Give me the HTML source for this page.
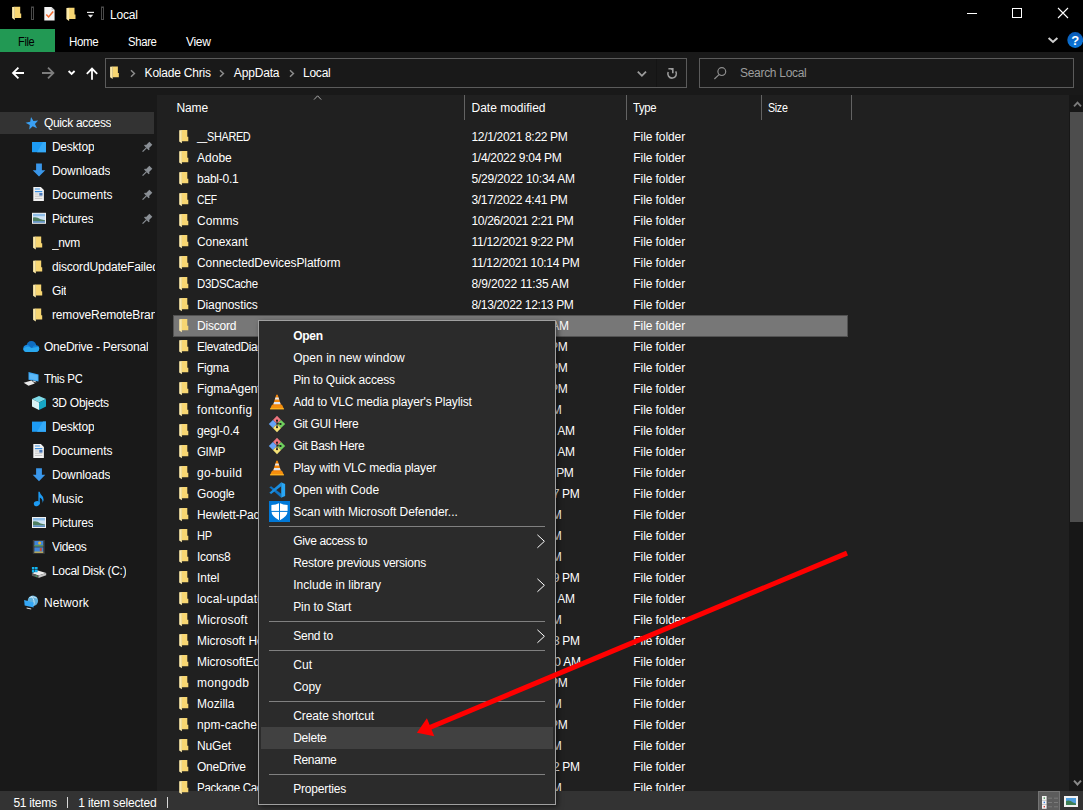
<!DOCTYPE html>
<html><head><meta charset="utf-8"><title>Local</title>
<style>
*{box-sizing:border-box;margin:0;padding:0}
html,body{width:1083px;height:810px;overflow:hidden;background:#191919}
body{position:relative;font-family:"Liberation Sans",sans-serif;font-size:12px;color:#fff}
.abs{position:absolute}
.t{position:absolute;white-space:nowrap;line-height:16px;height:16px}
#title{left:0;top:0;width:1083px;height:52px;background:#000}
#filetab{left:0;top:29px;width:55px;height:23px;background:#229954}
#nav{left:0;top:95px;width:157px;height:696px;background:#191919;overflow:hidden}
#list{left:157px;top:95px;width:912px;height:696px;background:#202020;overflow:hidden}
#status{left:0;top:791px;width:1083px;height:19px;background:#333}
.row{position:absolute;left:16px;width:674.5px;height:21px}
.row span{position:absolute;top:3px;line-height:16px;white-space:nowrap}
.row .n{left:24px}
.row .d{left:298.5px}
.row .ty{left:460.3px;letter-spacing:-0.08px}
.row.sel{background:#777;height:21.5px;height:22px;box-shadow:inset 0 0 0 1px #525252}
.ni{position:absolute;white-space:nowrap;line-height:16px;height:16px}
#navsel{left:0;top:17px;width:154px;height:22px;background:#333}
#menu{left:258px;top:320px;width:298px;height:485px;background:#2b2b2b;border:1px solid #a0a0a0;box-shadow:2px 2px 5px rgba(0,0,0,.5)}
.mi{position:absolute;left:34.2px;line-height:16px;white-space:nowrap}
.sep{position:absolute;left:10px;width:276px;height:1px;background:#808080}
#hl{left:2px;top:406px;width:292px;height:22px;background:#414141}
svg.ov{position:absolute;left:0;top:0}
</style></head><body>

<div class="abs" id="title"></div>
<div class="abs" id="filetab"></div>
<div class="t" style="left:18.2px;top:34px;letter-spacing:-0.35px;display:inline-block;transform-origin:0 0;transform:scaleX(0.914);color:#000;">File</div>
<div class="t" style="left:69.2px;top:34px;letter-spacing:-0.35px;display:inline-block;transform-origin:0 0;transform:scaleX(0.960);">Home</div>
<div class="t" style="left:128.4px;top:34px;letter-spacing:-0.35px;display:inline-block;transform-origin:0 0;transform:scaleX(0.944);">Share</div>
<div class="t" style="left:186px;top:34px;letter-spacing:-0.30px;">View</div>
<div class="t" style="left:110px;top:7px;letter-spacing:-0.22px;">Local</div>
<div class="abs" style="left:105px;top:58px;width:582px;height:30px;border:1px solid #5b5b5b;background:#191919"></div>
<div class="t" style="left:144.6px;top:65px;letter-spacing:-0.21px;">Kolade Chris</div>
<div class="t" style="left:233.8px;top:65px;letter-spacing:-0.16px;">AppData</div>
<div class="t" style="left:303px;top:65px;letter-spacing:-0.24px;">Local</div>
<div class="abs" style="left:699px;top:58px;width:375px;height:30px;border:1px solid #5b5b5b;background:#191919"></div>
<div class="t" style="left:740px;top:65px;letter-spacing:-0.30px;color:#9d9d9d;">Search Local</div>
<div class="abs" id="nav"><div class="abs" id="navsel"></div>
<div class="ni" style="left:43.9px;top:20px;max-width:111.29999999999998px;overflow:hidden;letter-spacing:-0.33px">Quick access</div>
<div class="ni" style="left:51.9px;top:44px;max-width:103.29999999999998px;overflow:hidden;letter-spacing:-0.22px">Desktop</div>
<div class="ni" style="left:51.9px;top:68px;max-width:103.29999999999998px;overflow:hidden;letter-spacing:-0.09px">Downloads</div>
<div class="ni" style="left:51.9px;top:92px;max-width:103.29999999999998px;overflow:hidden;letter-spacing:-0.01px">Documents</div>
<div class="ni" style="left:51.9px;top:116px;max-width:103.29999999999998px;overflow:hidden;letter-spacing:-0.22px">Pictures</div>
<div class="ni" style="left:51.9px;top:140px;max-width:103.29999999999998px;overflow:hidden;letter-spacing:-0.35px">_nvm</div>
<div class="ni" style="left:51.9px;top:164px;max-width:103.29999999999998px;overflow:hidden;letter-spacing:-0.17px">discordUpdateFailed</div>
<div class="ni" style="left:51.9px;top:188px;max-width:103.29999999999998px;overflow:hidden;letter-spacing:-0.31px">Git</div>
<div class="ni" style="left:51.9px;top:212px;max-width:103.29999999999998px;overflow:hidden;letter-spacing:-0.13px">removeRemoteBranch</div>
<div class="ni" style="left:43.9px;top:244px;max-width:111.29999999999998px;overflow:hidden;letter-spacing:-0.22px">OneDrive - Personal</div>
<div class="ni" style="left:43.9px;top:276px;max-width:111.29999999999998px;overflow:hidden;letter-spacing:-0.35px;display:inline-block;transform-origin:0 0;transform:scaleX(0.962)">This PC</div>
<div class="ni" style="left:51.9px;top:300px;max-width:103.29999999999998px;overflow:hidden;letter-spacing:-0.25px">3D Objects</div>
<div class="ni" style="left:51.9px;top:324px;max-width:103.29999999999998px;overflow:hidden;letter-spacing:-0.22px">Desktop</div>
<div class="ni" style="left:51.9px;top:348px;max-width:103.29999999999998px;overflow:hidden;letter-spacing:-0.01px">Documents</div>
<div class="ni" style="left:51.9px;top:372px;max-width:103.29999999999998px;overflow:hidden;letter-spacing:-0.09px">Downloads</div>
<div class="ni" style="left:51.9px;top:396px;max-width:103.29999999999998px;overflow:hidden;letter-spacing:0.03px">Music</div>
<div class="ni" style="left:51.9px;top:420px;max-width:103.29999999999998px;overflow:hidden;letter-spacing:-0.22px">Pictures</div>
<div class="ni" style="left:51.9px;top:444px;max-width:103.29999999999998px;overflow:hidden;letter-spacing:-0.30px">Videos</div>
<div class="ni" style="left:51.9px;top:468px;max-width:103.29999999999998px;overflow:hidden;letter-spacing:-0.28px">Local Disk (C:)</div>
<div class="ni" style="left:43.9px;top:500px;max-width:111.29999999999998px;overflow:hidden;letter-spacing:0.15px">Network</div>
</div>
<div class="abs" id="list">
<div class="t" style="left:19.4px;top:5px;letter-spacing:-0.10px">Name</div>
<div class="t" style="left:314.5px;top:5px;letter-spacing:-0.00px">Date modified</div>
<div class="t" style="left:476.2px;top:5px;letter-spacing:-0.35px;display:inline-block;transform-origin:0 0;transform:scaleX(0.942)">Type</div>
<div class="t" style="left:611.2px;top:5px;letter-spacing:-0.35px;display:inline-block;transform-origin:0 0;transform:scaleX(0.889)">Size</div>
<div class="row" style="top:31px"><span class="n" style="top:2px;letter-spacing:-0.35px;display:inline-block;transform-origin:0 0;transform:scaleX(0.782)">__</span><span class="n" style="left:33.9px;letter-spacing:-0.35px;display:inline-block;transform-origin:0 0;transform:scaleX(0.906)">SHARED</span><span class="d" style="letter-spacing:-0.32px">12/1/2021 8:22 PM</span><span class="ty">File folder</span></div>
<div class="row" style="top:52px"><span class="n" style="letter-spacing:0.02px">Adobe</span><span class="d" style="letter-spacing:-0.30px">1/4/2022 9:04 PM</span><span class="ty">File folder</span></div>
<div class="row" style="top:73px"><span class="n" style="letter-spacing:-0.23px">babl-0.1</span><span class="d" style="letter-spacing:-0.23px">5/29/2022 10:34 AM</span><span class="ty">File folder</span></div>
<div class="row" style="top:94px"><span class="n" style="letter-spacing:-0.35px;display:inline-block;transform-origin:0 0;transform:scaleX(0.858)">CEF</span><span class="d" style="letter-spacing:-0.32px">3/17/2022 4:41 PM</span><span class="ty">File folder</span></div>
<div class="row" style="top:115px"><span class="n" style="letter-spacing:0.03px">Comms</span><span class="d" style="letter-spacing:-0.34px">10/26/2021 2:21 PM</span><span class="ty">File folder</span></div>
<div class="row" style="top:136px"><span class="n" style="letter-spacing:-0.08px">Conexant</span><span class="d" style="letter-spacing:-0.29px">11/12/2021 9:22 PM</span><span class="ty">File folder</span></div>
<div class="row" style="top:157px"><span class="n" style="letter-spacing:-0.08px">ConnectedDevicesPlatform</span><span class="d" style="letter-spacing:-0.31px">11/12/2021 10:14 PM</span><span class="ty">File folder</span></div>
<div class="row" style="top:178px"><span class="n" style="letter-spacing:-0.35px;display:inline-block;transform-origin:0 0;transform:scaleX(0.955)">D3DSCache</span><span class="d" style="letter-spacing:-0.15px">8/9/2022 11:35 AM</span><span class="ty">File folder</span></div>
<div class="row" style="top:199px"><span class="n" style="letter-spacing:-0.12px">Diagnostics</span><span class="d" style="letter-spacing:-0.34px">8/13/2022 12:13 PM</span><span class="ty">File folder</span></div>
<div class="row sel" style="top:220px"><span class="n" style="letter-spacing:-0.20px">Discord</span><span class="d" style="letter-spacing:-0.20px">8/13/2022 9:41 AM</span><span class="ty">File folder</span></div>
<div class="row" style="top:241px"><span class="n" style="letter-spacing:-0.35px;display:inline-block;transform-origin:0 0;transform:scaleX(0.989)">ElevatedDiagnostics</span><span class="d" style="letter-spacing:-0.32px">12/1/2021 8:30 PM</span><span class="ty">File folder</span></div>
<div class="row" style="top:262px"><span class="n" style="letter-spacing:-0.27px">Figma</span><span class="d" style="letter-spacing:-0.32px">5/14/2022 7:52 PM</span><span class="ty">File folder</span></div>
<div class="row" style="top:283px"><span class="n" style="letter-spacing:-0.12px">FigmaAgent</span><span class="d" style="letter-spacing:-0.32px">5/14/2022 7:52 PM</span><span class="ty">File folder</span></div>
<div class="row" style="top:304px"><span class="n" style="letter-spacing:0.34px">fontconfig</span><span class="d" style="letter-spacing:-0.24px">3/5/2022 2:11 PM</span><span class="ty">File folder</span></div>
<div class="row" style="top:325px"><span class="n" style="letter-spacing:-0.12px">gegl-0.4</span><span class="d" style="letter-spacing:-0.23px">5/29/2022 10:34 AM</span><span class="ty">File folder</span></div>
<div class="row" style="top:346px"><span class="n" style="letter-spacing:-0.35px;display:inline-block;transform-origin:0 0;transform:scaleX(0.960)">GIMP</span><span class="d" style="letter-spacing:-0.23px">5/29/2022 10:34 AM</span><span class="ty">File folder</span></div>
<div class="row" style="top:367px"><span class="n" style="letter-spacing:0.32px">go-build</span><span class="d" style="letter-spacing:-0.34px">3/14/2022 12:40 PM</span><span class="ty">File folder</span></div>
<div class="row" style="top:388px"><span class="n" style="letter-spacing:-0.18px">Google</span><span class="d" style="letter-spacing:-0.31px">11/12/2021 10:17 PM</span><span class="ty">File folder</span></div>
<div class="row" style="top:409px"><span class="n" style="letter-spacing:-0.21px">Hewlett-Packard</span><span class="d" style="letter-spacing:-0.30px">1/4/2022 8:25 PM</span><span class="ty">File folder</span></div>
<div class="row" style="top:430px"><span class="n" style="letter-spacing:-0.35px;display:inline-block;transform-origin:0 0;transform:scaleX(0.927)">HP</span><span class="d" style="letter-spacing:-0.30px">1/4/2022 8:25 PM</span><span class="ty">File folder</span></div>
<div class="row" style="top:451px"><span class="n" style="letter-spacing:-0.35px">Icons8</span><span class="d" style="letter-spacing:-0.30px">4/2/2022 1:15 PM</span><span class="ty">File folder</span></div>
<div class="row" style="top:472px"><span class="n" style="letter-spacing:-0.06px">Intel</span><span class="d" style="letter-spacing:-0.31px">11/12/2021 10:19 PM</span><span class="ty">File folder</span></div>
<div class="row" style="top:493px"><span class="n" style="letter-spacing:0.13px">local-updater</span><span class="d" style="letter-spacing:-0.23px">7/21/2022 10:41 AM</span><span class="ty">File folder</span></div>
<div class="row" style="top:514px"><span class="n" style="letter-spacing:0.23px">Microsoft</span><span class="d" style="letter-spacing:-0.30px">8/2/2022 1:05 PM</span><span class="ty">File folder</span></div>
<div class="row" style="top:535px"><span class="n" style="letter-spacing:-0.06px">Microsoft Help</span><span class="d" style="letter-spacing:-0.35px">10/26/2021 12:13 PM</span><span class="ty">File folder</span></div>
<div class="row" style="top:556px"><span class="n" style="letter-spacing:-0.03px">MicrosoftEdge</span><span class="d" style="letter-spacing:-0.21px">10/26/2021 11:40 AM</span><span class="ty">File folder</span></div>
<div class="row" style="top:577px"><span class="n" style="letter-spacing:0.31px">mongodb</span><span class="d" style="letter-spacing:-0.32px">1/20/2022 3:45 PM</span><span class="ty">File folder</span></div>
<div class="row" style="top:598px"><span class="n" style="letter-spacing:0.01px">Mozilla</span><span class="d" style="letter-spacing:-0.30px">3/2/2022 1:21 PM</span><span class="ty">File folder</span></div>
<div class="row" style="top:619px"><span class="n" style="letter-spacing:0.08px">npm-cache</span><span class="d" style="letter-spacing:-0.32px">1/14/2022 4:18 PM</span><span class="ty">File folder</span></div>
<div class="row" style="top:640px"><span class="n" style="letter-spacing:-0.18px">NuGet</span><span class="d" style="letter-spacing:-0.30px">2/9/2022 2:07 PM</span><span class="ty">File folder</span></div>
<div class="row" style="top:661px"><span class="n" style="letter-spacing:-0.24px">OneDrive</span><span class="d" style="letter-spacing:-0.35px">10/26/2021 12:02 PM</span><span class="ty">File folder</span></div>
<div class="row" style="top:682px"><span class="n" style="letter-spacing:-0.35px;display:inline-block;transform-origin:0 0;transform:scaleX(0.966)">Package Cache</span><span class="d" style="letter-spacing:-0.30px">1/4/2022 3:50 PM</span><span class="ty">File folder</span></div>
</div>
<div class="abs" id="status"></div>
<div class="t" style="left:13.4px;top:795px;letter-spacing:-0.26px;">51 items</div>
<div class="abs" style="left:67px;top:797px;width:1px;height:11px;background:#d8d8d8"></div>
<div class="t" style="left:78.2px;top:795px;letter-spacing:-0.16px;">1 item selected</div>
<div class="abs" style="left:167px;top:797px;width:1px;height:11px;background:#d8d8d8"></div>
<svg class="ov" width="1083" height="810" viewBox="0 0 1083 810"><g transform="translate(12 6.3) scale(1.0)"><path d="M2.6 0.4 H8.2 V7.2 H9.2 V11.6 H2.6 Z" fill="#f7d672"/><path d="M0.1 0.7 L2.8 0.4 V13.6 L0.1 11.8 Z" fill="#fdeaa8"/></g>
<rect x="31.5" y="7" width="2" height="12.5" fill="none" stroke="#4a4a4a" stroke-width="1"/>
<path d="M44.3 7 H51.5 L54.6 10 V20.4 H44.3 Z" fill="#f4f4f4"/><path d="M51.5 7 L54.6 10 H51.5 Z" fill="#c9c9c9"/><path d="M46.3 14.6 L48.6 17 L53.2 11.6" fill="none" stroke="#f26a2e" stroke-width="1.5"/>
<g transform="translate(66.3 7.3) scale(1.0)"><path d="M2.6 0.4 H8.2 V7.2 H9.2 V11.6 H2.6 Z" fill="#f7d672"/><path d="M0.1 0.7 L2.8 0.4 V13.6 L0.1 11.8 Z" fill="#fdeaa8"/></g>
<path d="M87 12.4 H94" stroke="#e8e8e8" stroke-width="1.2"/><path d="M87.8 14.8 H93.2 L90.5 17.8 Z" fill="#e8e8e8"/>
<rect x="101.5" y="7" width="2" height="12.5" fill="none" stroke="#4a4a4a" stroke-width="1"/>
<path d="M967 13.5 H977" stroke="#fff" stroke-width="1"/>
<rect x="1012.5" y="8.5" width="9" height="9" fill="none" stroke="#fff" stroke-width="1"/>
<path d="M1058 8 L1068 18 M1068 8 L1058 18" stroke="#fff" stroke-width="1.1"/>
<path d="M1048.6 38 L1053 42 L1057.4 38" fill="none" stroke="#cfcfcf" stroke-width="2"/>
<linearGradient id="hg" x1="0" y1="0" x2="0" y2="1"><stop offset="0" stop-color="#0a5ab6"/><stop offset="1" stop-color="#0b78da"/></linearGradient><circle cx="1075.2" cy="40" r="7.9" fill="url(#hg)"/>
<path d="M24 73 H13 M18.4 67.6 L13 73 L18.4 78.4" fill="none" stroke="#fff" stroke-width="1.8"/>
<path d="M42 73 H53.3 M48 67.6 L53.4 73 L48 78.4" fill="none" stroke="#7d7d7d" stroke-width="1.8"/>
<path d="M68.6 71 L71.6 74 L74.6 71" fill="none" stroke="#fff" stroke-width="1.8"/>
<path d="M92 79.8 V69 M86.8 73.8 L92 68.6 L97.2 73.8" fill="none" stroke="#fff" stroke-width="1.8"/>
<g transform="translate(110 66) scale(0.96)"><path d="M2.6 0.4 H8.2 V7.2 H9.2 V11.6 H2.6 Z" fill="#f7d672"/><path d="M0.1 0.7 L2.8 0.4 V13.6 L0.1 11.8 Z" fill="#fdeaa8"/></g>
<path d="M131 70.3 L134.4 73.5 L131 76.7" fill="none" stroke="#8c8c8c" stroke-width="1.5"/>
<path d="M220 70.3 L223.4 73.5 L220 76.7" fill="none" stroke="#8c8c8c" stroke-width="1.5"/>
<path d="M290 70.3 L293.4 73.5 L290 76.7" fill="none" stroke="#8c8c8c" stroke-width="1.5"/>
<path d="M637.8 71.6 L641.9 75.8 L646 71.6" fill="none" stroke="#9c9c9c" stroke-width="1.8"/>
<path d="M656.5 59 V87" stroke="#141414" stroke-width="1"/>
<path d="M675.7 71.4 A4.3 4.3 0 1 1 668.2 72" fill="none" stroke="#9c9c9c" stroke-width="1.6"/><path d="M668.4 68.7 H672.8 V73.2" fill="none" stroke="#9c9c9c" stroke-width="1.6"/><path d="M670.6 69 H672.6 V71 Z" fill="#9c9c9c"/>
<circle cx="721.8" cy="71.6" r="3.9" fill="none" stroke="#8e8e8e" stroke-width="1.2"/><path d="M719 74.6 L714.4 79" stroke="#8e8e8e" stroke-width="1.2"/>
<path d="M314 99.6 L317.6 95.8 L321.2 99.6" fill="none" stroke="#a9a9a9" stroke-width="1"/>
<path d="M464.5 95 V120" stroke="#636363" stroke-width="1"/>
<path d="M626.5 95 V120" stroke="#636363" stroke-width="1"/>
<path d="M761.5 95 V120" stroke="#636363" stroke-width="1"/>
<path d="M851.5 95 V120" stroke="#636363" stroke-width="1"/>
<rect x="1069" y="95" width="14" height="696" fill="#171717"/>
<rect x="1070" y="112" width="13" height="410" fill="#4d4d4d"/>
<path d="M1074 106.4 L1077.5 102.6 L1081 106.4" fill="none" stroke="#7c7c7c" stroke-width="1.8"/>
<path d="M1074 780.6 L1077.5 784.4 L1081 780.6" fill="none" stroke="#8a8a8a" stroke-width="2"/>
<g transform="rotate(-10 32.2 123.6)"><polygon points="32.20,116.90 33.85,121.33 38.57,121.53 34.86,124.47 36.14,129.02 32.20,126.40 28.26,129.02 29.54,124.47 25.83,121.53 30.55,121.33" fill="#3aa0f3"/></g>
<rect x="32" y="142" width="14" height="10.2" fill="#1d9bf3"/><path d="M37 152.2 L43 142 H46 V152.2 Z" fill="#35a9f7"/>
<path d="M36.1 163.6 H41.9 V170.2 H45.3 L39.0 176.6 L32.7 170.2 H36.1 Z" fill="#3a97ea"/>
<path d="M33.3 187 H40.9 L43.9 190 V201 H33.3 Z" fill="#f2f2f2"/><path d="M34.9 189 H39.9 M34.9 191.6 H42.3" stroke="#3b8fe0" stroke-width="1.1"/><path d="M34.9 194 H38.699999999999996 M34.9 196.2 H42.3 M34.9 198.4 H42.3" stroke="#c2c2c2" stroke-width="1"/><rect x="39.3" y="193" width="3.2" height="2.6" fill="#4a78b8"/>
<rect x="32" y="212.8" width="14" height="11" fill="#f1f1f1"/><rect x="33" y="213.8" width="12" height="9" fill="#cfe3f4"/><rect x="33" y="213.8" width="12" height="2.4" fill="#8fbfea"/><path d="M33 217.4 Q36.6 216.4 40.6 219.20000000000002 L45 220.20000000000002 V221.4 H33 Z" fill="#4f7f62"/><path d="M33 221.20000000000002 H45 V222.8 H33 Z" fill="#5f8fc4"/>
<g transform="translate(146.6 147.6) rotate(45)" fill="#8b9096"><rect x="-2.1" y="-6" width="4.2" height="5.2"/><rect x="-3.3" y="-1.2" width="6.6" height="1.5"/><rect x="-0.6" y="0.3" width="1.2" height="5.4"/></g>
<g transform="translate(146.6 171.6) rotate(45)" fill="#8b9096"><rect x="-2.1" y="-6" width="4.2" height="5.2"/><rect x="-3.3" y="-1.2" width="6.6" height="1.5"/><rect x="-0.6" y="0.3" width="1.2" height="5.4"/></g>
<g transform="translate(146.6 195.6) rotate(45)" fill="#8b9096"><rect x="-2.1" y="-6" width="4.2" height="5.2"/><rect x="-3.3" y="-1.2" width="6.6" height="1.5"/><rect x="-0.6" y="0.3" width="1.2" height="5.4"/></g>
<g transform="translate(146.6 219.6) rotate(45)" fill="#8b9096"><rect x="-2.1" y="-6" width="4.2" height="5.2"/><rect x="-3.3" y="-1.2" width="6.6" height="1.5"/><rect x="-0.6" y="0.3" width="1.2" height="5.4"/></g>
<g transform="translate(33 236.0) scale(1.0)"><path d="M2.6 0.4 H8.2 V7.2 H9.2 V11.6 H2.6 Z" fill="#f7d672"/><path d="M0.1 0.7 L2.8 0.4 V13.6 L0.1 11.8 Z" fill="#fdeaa8"/></g>
<g transform="translate(33 260.0) scale(1.0)"><path d="M2.6 0.4 H8.2 V7.2 H9.2 V11.6 H2.6 Z" fill="#f7d672"/><path d="M0.1 0.7 L2.8 0.4 V13.6 L0.1 11.8 Z" fill="#fdeaa8"/></g>
<g transform="translate(33 284.0) scale(1.0)"><path d="M2.6 0.4 H8.2 V7.2 H9.2 V11.6 H2.6 Z" fill="#f7d672"/><path d="M0.1 0.7 L2.8 0.4 V13.6 L0.1 11.8 Z" fill="#fdeaa8"/></g>
<g transform="translate(33 308.0) scale(1.0)"><path d="M2.6 0.4 H8.2 V7.2 H9.2 V11.6 H2.6 Z" fill="#f7d672"/><path d="M0.1 0.7 L2.8 0.4 V13.6 L0.1 11.8 Z" fill="#fdeaa8"/></g>
<circle cx="31.4" cy="346" r="4.9" fill="#0f6dc0"/><circle cx="35.8" cy="348.6" r="3.4" fill="#1483d8"/><circle cx="26.8" cy="348.5" r="3.5" fill="#1b8de4"/><path d="M23.3 348.8 Q27 345.4 31.6 348 L38.6 346.8 A3.3 3.3 0 0 1 36 352 H26.6 A3.5 3.5 0 0 1 23.3 348.8 Z" fill="#2aa8ee"/>
<path d="M28.5 372.1 L38.5 374.5 V381.6 L28.5 379.7 Z" fill="#3aa6f3"/><path d="M29.5 373.4 L37.6 375.3 V380.4 L29.5 378.8 Z" fill="#5cb8f7"/><path d="M33 380.4 L35.4 380.9 L36.6 382.6 L33.4 382 Z" fill="#c8c8c8"/><path d="M23.7 382.7 L31.5 380.4 L34.8 383.4 L28.5 385.8 Z" fill="#e9e9e9"/>
<path d="M39 396 L46 399 L39 402.4 L32 399 Z" fill="#7fdbe8"/><path d="M32 399 L39 402.4 V410 L32 406.6 Z" fill="#d8f3f6"/><path d="M46 399 L39 402.4 V410 L46 406.6 Z" fill="#17a6c4"/>
<rect x="32" y="421.6" width="14" height="10.2" fill="#1d9bf3"/><path d="M37 431.8 L43 421.6 H46 V431.8 Z" fill="#35a9f7"/>
<path d="M33.3 444 H40.9 L43.9 447 V458 H33.3 Z" fill="#f2f2f2"/><path d="M34.9 446 H39.9 M34.9 448.6 H42.3" stroke="#3b8fe0" stroke-width="1.1"/><path d="M34.9 451 H38.699999999999996 M34.9 453.2 H42.3 M34.9 455.4 H42.3" stroke="#c2c2c2" stroke-width="1"/><rect x="39.3" y="450" width="3.2" height="2.6" fill="#4a78b8"/>
<path d="M36.1 468.2 H41.9 V474.8 H45.3 L39.0 481.2 L32.7 474.8 H36.1 Z" fill="#3a97ea"/>
<ellipse cx="36.8" cy="503.6" rx="3" ry="2.5" transform="rotate(-20 36.8 503.6)" fill="#1d9bf3"/><path d="M38.4 504 V491.8 H39.6 Q40.2 494.6 43 497 Q44.4 499.6 42.6 503 Q43 499.4 39.8 497.6 V504 Z" fill="#1d9bf3"/>
<rect x="32" y="517" width="14" height="11" fill="#f1f1f1"/><rect x="33" y="518" width="12" height="9" fill="#cfe3f4"/><rect x="33" y="518" width="12" height="2.4" fill="#8fbfea"/><path d="M33 521.6 Q36.6 520.6 40.6 523.4 L45 524.4 V525.6 H33 Z" fill="#4f7f62"/><path d="M33 525.4 H45 V527 H33 Z" fill="#5f8fc4"/>
<rect x="32.8" y="540" width="12" height="13.8" fill="#3c3c3c"/><rect x="34.4" y="541" width="8.8" height="5.4" fill="#3f86d8"/><rect x="34.4" y="547.4" width="8.8" height="5.4" fill="#3f86d8"/><circle cx="39.6" cy="543" r="1.5" fill="#e3b33a"/><path d="M34.4 545.2 H43.2 V546.4 H34.4 Z" fill="#5a9a4a"/><path d="M34.4 551.6 H43.2 V552.8 H34.4 Z" fill="#d0b040"/><rect x="39.8" y="548" width="2" height="3.2" fill="#c0503a"/>
<path d="M31.9 573.2 L37.8 570.6 L46.2 572.9 L38.5 575.6 Z" fill="#ececec"/><path d="M31.9 573.2 L38.5 575.6 V578 L31.9 575.7 Z" fill="#5a5a5a"/><path d="M38.5 575.6 L46.2 572.9 V575.2 L38.5 578 Z" fill="#c4c4c4"/><rect x="35.6" y="575.6" width="1.6" height="0.9" fill="#35c45a" transform="rotate(19 36 576)"/><path d="M31.9 566.9 H34.5 V569.5 H31.9 Z M35 566.9 H37.6 V569.5 H35 Z M31.9 570 H34.5 V572.6 H31.9 Z M35 570 H37.6 V572.2 H35 Z" fill="#12b3f0"/>
<circle cx="32.9" cy="600.8" r="5.2" fill="#5fb0dc"/><path d="M29.4 597.6 Q33 595.6 36.8 598.2 M31.2 596 Q35.6 600.6 33.4 605.8" fill="none" stroke="#c9e6f6" stroke-width="1"/><path d="M24.1 600.1 L33.6 602.5 V607.6 L24.7 605.6 Z" fill="#35a7f5"/><path d="M26.6 607.6 L31.2 608.6 V609.6 L26.6 608.6 Z" fill="#e4e4e4"/>
<g transform="translate(179.1 129.6) scale(1.0)"><path d="M2.6 0.4 H8.2 V7.2 H9.2 V11.6 H2.6 Z" fill="#f7d672"/><path d="M0.1 0.7 L2.8 0.4 V13.6 L0.1 11.8 Z" fill="#fdeaa8"/></g>
<g transform="translate(179.1 150.6) scale(1.0)"><path d="M2.6 0.4 H8.2 V7.2 H9.2 V11.6 H2.6 Z" fill="#f7d672"/><path d="M0.1 0.7 L2.8 0.4 V13.6 L0.1 11.8 Z" fill="#fdeaa8"/></g>
<g transform="translate(179.1 171.6) scale(1.0)"><path d="M2.6 0.4 H8.2 V7.2 H9.2 V11.6 H2.6 Z" fill="#f7d672"/><path d="M0.1 0.7 L2.8 0.4 V13.6 L0.1 11.8 Z" fill="#fdeaa8"/></g>
<g transform="translate(179.1 192.6) scale(1.0)"><path d="M2.6 0.4 H8.2 V7.2 H9.2 V11.6 H2.6 Z" fill="#f7d672"/><path d="M0.1 0.7 L2.8 0.4 V13.6 L0.1 11.8 Z" fill="#fdeaa8"/></g>
<g transform="translate(179.1 213.6) scale(1.0)"><path d="M2.6 0.4 H8.2 V7.2 H9.2 V11.6 H2.6 Z" fill="#f7d672"/><path d="M0.1 0.7 L2.8 0.4 V13.6 L0.1 11.8 Z" fill="#fdeaa8"/></g>
<g transform="translate(179.1 234.6) scale(1.0)"><path d="M2.6 0.4 H8.2 V7.2 H9.2 V11.6 H2.6 Z" fill="#f7d672"/><path d="M0.1 0.7 L2.8 0.4 V13.6 L0.1 11.8 Z" fill="#fdeaa8"/></g>
<g transform="translate(179.1 255.6) scale(1.0)"><path d="M2.6 0.4 H8.2 V7.2 H9.2 V11.6 H2.6 Z" fill="#f7d672"/><path d="M0.1 0.7 L2.8 0.4 V13.6 L0.1 11.8 Z" fill="#fdeaa8"/></g>
<g transform="translate(179.1 276.6) scale(1.0)"><path d="M2.6 0.4 H8.2 V7.2 H9.2 V11.6 H2.6 Z" fill="#f7d672"/><path d="M0.1 0.7 L2.8 0.4 V13.6 L0.1 11.8 Z" fill="#fdeaa8"/></g>
<g transform="translate(179.1 297.6) scale(1.0)"><path d="M2.6 0.4 H8.2 V7.2 H9.2 V11.6 H2.6 Z" fill="#f7d672"/><path d="M0.1 0.7 L2.8 0.4 V13.6 L0.1 11.8 Z" fill="#fdeaa8"/></g>
<g transform="translate(179.1 318.6) scale(1.0)"><path d="M2.6 0.4 H8.2 V7.2 H9.2 V11.6 H2.6 Z" fill="#f7d672"/><path d="M0.1 0.7 L2.8 0.4 V13.6 L0.1 11.8 Z" fill="#fdeaa8"/></g>
<g transform="translate(179.1 339.6) scale(1.0)"><path d="M2.6 0.4 H8.2 V7.2 H9.2 V11.6 H2.6 Z" fill="#f7d672"/><path d="M0.1 0.7 L2.8 0.4 V13.6 L0.1 11.8 Z" fill="#fdeaa8"/></g>
<g transform="translate(179.1 360.6) scale(1.0)"><path d="M2.6 0.4 H8.2 V7.2 H9.2 V11.6 H2.6 Z" fill="#f7d672"/><path d="M0.1 0.7 L2.8 0.4 V13.6 L0.1 11.8 Z" fill="#fdeaa8"/></g>
<g transform="translate(179.1 381.6) scale(1.0)"><path d="M2.6 0.4 H8.2 V7.2 H9.2 V11.6 H2.6 Z" fill="#f7d672"/><path d="M0.1 0.7 L2.8 0.4 V13.6 L0.1 11.8 Z" fill="#fdeaa8"/></g>
<g transform="translate(179.1 402.6) scale(1.0)"><path d="M2.6 0.4 H8.2 V7.2 H9.2 V11.6 H2.6 Z" fill="#f7d672"/><path d="M0.1 0.7 L2.8 0.4 V13.6 L0.1 11.8 Z" fill="#fdeaa8"/></g>
<g transform="translate(179.1 423.6) scale(1.0)"><path d="M2.6 0.4 H8.2 V7.2 H9.2 V11.6 H2.6 Z" fill="#f7d672"/><path d="M0.1 0.7 L2.8 0.4 V13.6 L0.1 11.8 Z" fill="#fdeaa8"/></g>
<g transform="translate(179.1 444.6) scale(1.0)"><path d="M2.6 0.4 H8.2 V7.2 H9.2 V11.6 H2.6 Z" fill="#f7d672"/><path d="M0.1 0.7 L2.8 0.4 V13.6 L0.1 11.8 Z" fill="#fdeaa8"/></g>
<g transform="translate(179.1 465.6) scale(1.0)"><path d="M2.6 0.4 H8.2 V7.2 H9.2 V11.6 H2.6 Z" fill="#f7d672"/><path d="M0.1 0.7 L2.8 0.4 V13.6 L0.1 11.8 Z" fill="#fdeaa8"/></g>
<g transform="translate(179.1 486.6) scale(1.0)"><path d="M2.6 0.4 H8.2 V7.2 H9.2 V11.6 H2.6 Z" fill="#f7d672"/><path d="M0.1 0.7 L2.8 0.4 V13.6 L0.1 11.8 Z" fill="#fdeaa8"/></g>
<g transform="translate(179.1 507.6) scale(1.0)"><path d="M2.6 0.4 H8.2 V7.2 H9.2 V11.6 H2.6 Z" fill="#f7d672"/><path d="M0.1 0.7 L2.8 0.4 V13.6 L0.1 11.8 Z" fill="#fdeaa8"/></g>
<g transform="translate(179.1 528.6) scale(1.0)"><path d="M2.6 0.4 H8.2 V7.2 H9.2 V11.6 H2.6 Z" fill="#f7d672"/><path d="M0.1 0.7 L2.8 0.4 V13.6 L0.1 11.8 Z" fill="#fdeaa8"/></g>
<g transform="translate(179.1 549.6) scale(1.0)"><path d="M2.6 0.4 H8.2 V7.2 H9.2 V11.6 H2.6 Z" fill="#f7d672"/><path d="M0.1 0.7 L2.8 0.4 V13.6 L0.1 11.8 Z" fill="#fdeaa8"/></g>
<g transform="translate(179.1 570.6) scale(1.0)"><path d="M2.6 0.4 H8.2 V7.2 H9.2 V11.6 H2.6 Z" fill="#f7d672"/><path d="M0.1 0.7 L2.8 0.4 V13.6 L0.1 11.8 Z" fill="#fdeaa8"/></g>
<g transform="translate(179.1 591.6) scale(1.0)"><path d="M2.6 0.4 H8.2 V7.2 H9.2 V11.6 H2.6 Z" fill="#f7d672"/><path d="M0.1 0.7 L2.8 0.4 V13.6 L0.1 11.8 Z" fill="#fdeaa8"/></g>
<g transform="translate(179.1 612.6) scale(1.0)"><path d="M2.6 0.4 H8.2 V7.2 H9.2 V11.6 H2.6 Z" fill="#f7d672"/><path d="M0.1 0.7 L2.8 0.4 V13.6 L0.1 11.8 Z" fill="#fdeaa8"/></g>
<g transform="translate(179.1 633.6) scale(1.0)"><path d="M2.6 0.4 H8.2 V7.2 H9.2 V11.6 H2.6 Z" fill="#f7d672"/><path d="M0.1 0.7 L2.8 0.4 V13.6 L0.1 11.8 Z" fill="#fdeaa8"/></g>
<g transform="translate(179.1 654.6) scale(1.0)"><path d="M2.6 0.4 H8.2 V7.2 H9.2 V11.6 H2.6 Z" fill="#f7d672"/><path d="M0.1 0.7 L2.8 0.4 V13.6 L0.1 11.8 Z" fill="#fdeaa8"/></g>
<g transform="translate(179.1 675.6) scale(1.0)"><path d="M2.6 0.4 H8.2 V7.2 H9.2 V11.6 H2.6 Z" fill="#f7d672"/><path d="M0.1 0.7 L2.8 0.4 V13.6 L0.1 11.8 Z" fill="#fdeaa8"/></g>
<g transform="translate(179.1 696.6) scale(1.0)"><path d="M2.6 0.4 H8.2 V7.2 H9.2 V11.6 H2.6 Z" fill="#f7d672"/><path d="M0.1 0.7 L2.8 0.4 V13.6 L0.1 11.8 Z" fill="#fdeaa8"/></g>
<g transform="translate(179.1 717.6) scale(1.0)"><path d="M2.6 0.4 H8.2 V7.2 H9.2 V11.6 H2.6 Z" fill="#f7d672"/><path d="M0.1 0.7 L2.8 0.4 V13.6 L0.1 11.8 Z" fill="#fdeaa8"/></g>
<g transform="translate(179.1 738.6) scale(1.0)"><path d="M2.6 0.4 H8.2 V7.2 H9.2 V11.6 H2.6 Z" fill="#f7d672"/><path d="M0.1 0.7 L2.8 0.4 V13.6 L0.1 11.8 Z" fill="#fdeaa8"/></g>
<g transform="translate(179.1 759.6) scale(1.0)"><path d="M2.6 0.4 H8.2 V7.2 H9.2 V11.6 H2.6 Z" fill="#f7d672"/><path d="M0.1 0.7 L2.8 0.4 V13.6 L0.1 11.8 Z" fill="#fdeaa8"/></g>
<g transform="translate(179.1 780.6) scale(1.0)"><path d="M2.6 0.4 H8.2 V7.2 H9.2 V11.6 H2.6 Z" fill="#f7d672"/><path d="M0.1 0.7 L2.8 0.4 V13.6 L0.1 11.8 Z" fill="#fdeaa8"/></g>
<rect x="1038.5" y="791.5" width="21" height="19" fill="#5c5c5c" stroke="#747474" stroke-width="1"/>
<rect x="1042" y="796.0" width="4.6" height="4.2" fill="#f2f2f2"/><rect x="1043.6" y="797.4" width="1.4" height="1.4" fill="#3a8a4a"/>
<path d="M1048 798.2 H1052 M1054 798.2 H1058" stroke="#7a7a7a" stroke-width="1"/>
<rect x="1042" y="800.3" width="4.6" height="4.2" fill="#f2f2f2"/><rect x="1043.6" y="801.6999999999999" width="1.4" height="1.4" fill="#3a7fe0"/>
<path d="M1048 802.5 H1052 M1054 802.5 H1058" stroke="#7a7a7a" stroke-width="1"/>
<rect x="1042" y="804.6" width="4.6" height="4.2" fill="#f2f2f2"/><rect x="1043.6" y="806.0" width="1.4" height="1.4" fill="#d83a3a"/>
<path d="M1048 806.8000000000001 H1052 M1054 806.8000000000001 H1058" stroke="#7a7a7a" stroke-width="1"/>
<rect x="1064" y="796" width="14" height="11" fill="#f2f2f2"/><rect x="1066" y="798" width="10" height="7" fill="#4f9fe0"/><path d="M1066 801 Q1070 799.6 1073 802.6 L1076 803.4 V805 H1066 Z" fill="#3f7f55"/></svg>
<div class="t" style="left:1071.3px;top:33px;font-weight:bold;font-size:13px">?</div>
<div class="abs" id="menu"><div class="abs" id="hl"></div>
<div class="mi" style="top:7px;letter-spacing:-0.27px;font-weight:bold;">Open</div>
<div class="mi" style="top:29px;letter-spacing:0.05px;">Open in new window</div>
<div class="mi" style="top:51px;letter-spacing:-0.20px;">Pin to Quick access</div>
<div class="mi" style="top:73px;letter-spacing:-0.13px;">Add to VLC media player's Playlist</div>
<div class="mi" style="top:95px;letter-spacing:-0.35px;">Git GUI Here</div>
<div class="mi" style="top:117px;letter-spacing:-0.33px;">Git Bash Here</div>
<div class="mi" style="top:139px;letter-spacing:-0.14px;">Play with VLC media player</div>
<div class="mi" style="top:161px;letter-spacing:-0.01px;">Open with Code</div>
<div class="mi" style="top:183px;letter-spacing:-0.05px;">Scan with Microsoft Defender...</div>
<div class="mi" style="top:212px;letter-spacing:-0.35px;">Give access to</div>
<div class="mi" style="top:234px;letter-spacing:-0.24px;">Restore previous versions</div>
<div class="mi" style="top:256px;letter-spacing:0.03px;">Include in library</div>
<div class="mi" style="top:278px;letter-spacing:-0.11px;">Pin to Start</div>
<div class="mi" style="top:307px;letter-spacing:-0.24px;">Send to</div>
<div class="mi" style="top:336px;letter-spacing:0.10px;">Cut</div>
<div class="mi" style="top:358px;letter-spacing:-0.03px;">Copy</div>
<div class="mi" style="top:387px;letter-spacing:-0.08px;">Create shortcut</div>
<div class="mi" style="top:409px;letter-spacing:-0.23px;">Delete</div>
<div class="mi" style="top:431px;letter-spacing:-0.35px;">Rename</div>
<div class="mi" style="top:460px;letter-spacing:-0.17px;">Properties</div>
<div class="sep" style="top:205px"></div>
<div class="sep" style="top:300px"></div>
<div class="sep" style="top:329px"></div>
<div class="sep" style="top:380px"></div>
<div class="sep" style="top:453px"></div>
</div>
<svg class="ov" width="1083" height="810" viewBox="0 0 1083 810"><path d="M276.2 395.0 Q277 394.20000000000005 277.8 395.0 L281.3 406.0 H272.7 Z" fill="#f4860b"/><path d="M275.5 397.40000000000003 H278.5 L279.2 399.6 H274.8 Z" fill="#dfe6f2"/><path d="M274.1 402.0 H279.9 L280.6 404.20000000000005 H273.4 Z" fill="#dfe6f2"/><path d="M272.2 404.20000000000005 L273.4 405.8 H280.6 L281.8 404.20000000000005 L284 409.20000000000005 H270 Z" fill="#f58f0e"/><path d="M270.4 408.20000000000005 H283.6 L284 409.20000000000005 H270 Z" fill="#ffbd24"/>
<path d="M277 415.79999999999995 L281.1 419.9 L277 424.0 L272.9 419.9 Z" fill="#f0767f"/><path d="M272.9 419.9 L277.0 424 L272.9 428.1 L268.79999999999995 424 Z" fill="#66a3f7"/><path d="M281.1 419.9 L285.20000000000005 424 L281.1 428.1 L277.0 424 Z" fill="#6fcf5d"/><path d="M277 424.0 L281.1 428.1 L277 432.20000000000005 L272.9 428.1 Z" fill="#f6e377"/><path d="M277 420.4 V427 M277 423.6 L280.4 424" stroke="#1c1c1c" stroke-width="0.9" fill="none"/><circle cx="277" cy="420.4" r="1" fill="#1c1c1c"/><circle cx="277" cy="427.2" r="1" fill="#1c1c1c"/><circle cx="280.6" cy="424" r="1" fill="#1c1c1c"/>
<path d="M277 437.79999999999995 L281.1 441.9 L277 446.0 L272.9 441.9 Z" fill="#f0767f"/><path d="M272.9 441.9 L277.0 446 L272.9 450.1 L268.79999999999995 446 Z" fill="#66a3f7"/><path d="M281.1 441.9 L285.20000000000005 446 L281.1 450.1 L277.0 446 Z" fill="#6fcf5d"/><path d="M277 446.0 L281.1 450.1 L277 454.20000000000005 L272.9 450.1 Z" fill="#f6e377"/><path d="M277 442.4 V449 M277 445.6 L280.4 446" stroke="#1c1c1c" stroke-width="0.9" fill="none"/><circle cx="277" cy="442.4" r="1" fill="#1c1c1c"/><circle cx="277" cy="449.2" r="1" fill="#1c1c1c"/><circle cx="280.6" cy="446" r="1" fill="#1c1c1c"/>
<path d="M276.2 461.0 Q277 460.20000000000005 277.8 461.0 L281.3 472.0 H272.7 Z" fill="#f4860b"/><path d="M275.5 463.40000000000003 H278.5 L279.2 465.6 H274.8 Z" fill="#dfe6f2"/><path d="M274.1 468.0 H279.9 L280.6 470.20000000000005 H273.4 Z" fill="#dfe6f2"/><path d="M272.2 470.20000000000005 L273.4 471.8 H280.6 L281.8 470.20000000000005 L284 475.20000000000005 H270 Z" fill="#f58f0e"/><path d="M270.4 474.20000000000005 H283.6 L284 475.20000000000005 H270 Z" fill="#ffbd24"/>
<g transform="translate(269 481.9) scale(0.163)"><path d="M75 98 L75 73 L13 26 L2 33 Z" fill="#0f74c4"/><path d="M75 2 L75 27 L13 74 L2 67 Z" fill="#1a8ee0"/><path d="M75 2 L99 13 V87 L75 98 Z" fill="#29a6f4"/></g>
<rect x="269" y="501" width="21" height="21" fill="#0078d7"/><path d="M279.5 503 Q283 505 287.6 505 V511 Q287.6 516.4 279.5 520.4 Q271.4 516.4 271.4 511 V505 Q276 505 279.5 503 Z" fill="#fff"/><path d="M279.5 502.6 V520.6 M271 511.4 H288" stroke="#0078d7" stroke-width="1"/>
<path d="M537.4 534.8 L544.4 541.3 L537.4 547.8" fill="none" stroke="#fff" stroke-width="1"/>
<path d="M537.4 578.8 L544.4 585.3 L537.4 591.8" fill="none" stroke="#fff" stroke-width="1"/>
<path d="M537.4 629.8 L544.4 636.3 L537.4 642.8" fill="none" stroke="#fff" stroke-width="1"/>
<path d="M847 553.1 L428 728.2" stroke="#ff0000" stroke-width="5"/><path d="M416.9 732.8 L426.9 718.2 L434.3 736.3 Z" fill="#ff0000"/></svg>
</body></html>
